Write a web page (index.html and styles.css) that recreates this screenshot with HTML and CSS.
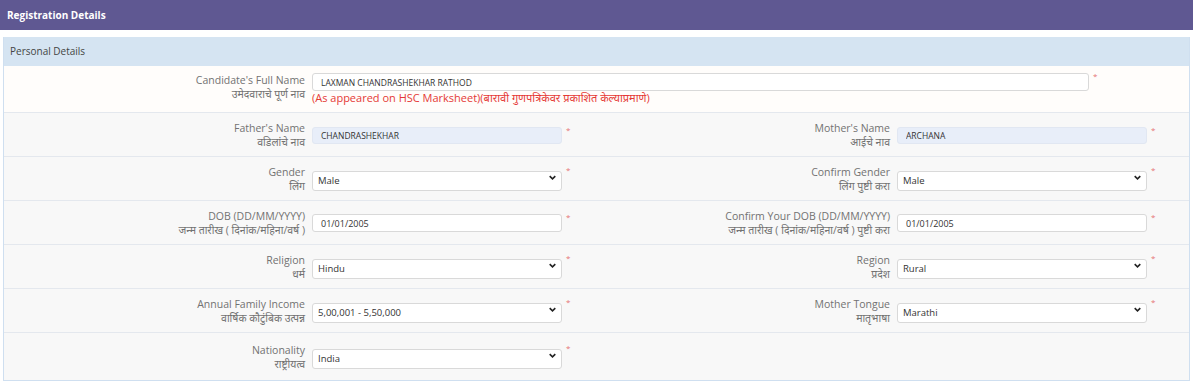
FILE: index.html
```html
<!DOCTYPE html>
<html lang="en">
<head>
  <meta charset="UTF-8">
  <meta name="viewport" content="width=device-width, initial-scale=1.0">
  <title>Registration Details</title>
  <link rel="stylesheet" href="styles.css">
</head>
<body>
  <div class="page-header">Registration Details</div>

  <div class="panel">
    <div class="panel-title">Personal Details</div>

    <!-- Full name -->
    <div class="form-row first">
      <label class="field-label" for="full-name">Candidate's Full Name<span class="mr">उमेदवाराचे पूर्ण नाव</span></label>
      <div class="control-wide">
        <div class="control">
          <input type="text" id="full-name" class="input wide" value="LAXMAN CHANDRASHEKHAR RATHOD">
          <span class="req">*</span>
        </div>
        <div class="hint">(As appeared on HSC Marksheet)(बारावी गुणपत्रिकेवर प्रकाशित केल्याप्रमाणे)</div>
      </div>
    </div>

    <!-- Parents -->
    <div class="form-row alt">
      <label class="field-label" for="father-name">Father's Name<span class="mr">वडिलांचे नाव</span></label>
      <div class="control">
        <input type="text" id="father-name" class="input locked" value="CHANDRASHEKHAR" readonly>
        <span class="req">*</span>
      </div>
      <label class="field-label" for="mother-name">Mother's Name<span class="mr">आईचे नाव</span></label>
      <div class="control">
        <input type="text" id="mother-name" class="input locked" value="ARCHANA" readonly>
        <span class="req">*</span>
      </div>
    </div>

    <!-- Gender -->
    <div class="form-row alt">
      <label class="field-label" for="gender">Gender<span class="mr">लिंग</span></label>
      <div class="control">
        <div class="select-wrap">
          <select id="gender" class="input select"><option>Male</option><option>Female</option></select>
          <svg class="chevron" viewBox="0 0 10 6"><path d="M1 1l4 4 4-4"/></svg>
        </div>
        <span class="req">*</span>
      </div>
      <label class="field-label" for="confirm-gender">Confirm Gender<span class="mr">लिंग पुष्टी करा</span></label>
      <div class="control">
        <div class="select-wrap">
          <select id="confirm-gender" class="input select"><option>Male</option><option>Female</option></select>
          <svg class="chevron" viewBox="0 0 10 6"><path d="M1 1l4 4 4-4"/></svg>
        </div>
        <span class="req">*</span>
      </div>
    </div>

    <!-- DOB -->
    <div class="form-row alt">
      <label class="field-label" for="dob">DOB (DD/MM/YYYY)<span class="mr">जन्म तारीख ( दिनांक/महिना/वर्ष )</span></label>
      <div class="control">
        <input type="text" id="dob" class="input plain" value="01/01/2005">
        <span class="req">*</span>
      </div>
      <label class="field-label" for="confirm-dob">Confirm Your DOB (DD/MM/YYYY)<span class="mr">जन्म तारीख ( दिनांक/महिना/वर्ष ) पुष्टी करा</span></label>
      <div class="control">
        <input type="text" id="confirm-dob" class="input plain" value="01/01/2005">
        <span class="req">*</span>
      </div>
    </div>

    <!-- Religion / Region -->
    <div class="form-row alt">
      <label class="field-label" for="religion">Religion<span class="mr">धर्म</span></label>
      <div class="control">
        <div class="select-wrap">
          <select id="religion" class="input select"><option>Hindu</option></select>
          <svg class="chevron" viewBox="0 0 10 6"><path d="M1 1l4 4 4-4"/></svg>
        </div>
        <span class="req">*</span>
      </div>
      <label class="field-label" for="region">Region<span class="mr">प्रदेश</span></label>
      <div class="control">
        <div class="select-wrap">
          <select id="region" class="input select"><option>Rural</option><option>Urban</option></select>
          <svg class="chevron" viewBox="0 0 10 6"><path d="M1 1l4 4 4-4"/></svg>
        </div>
        <span class="req">*</span>
      </div>
    </div>

    <!-- Income / Tongue -->
    <div class="form-row alt">
      <label class="field-label" for="income">Annual Family Income<span class="mr">वार्षिक कौटुंबिक उत्पन्न</span></label>
      <div class="control">
        <div class="select-wrap">
          <select id="income" class="input select"><option>5,00,001 - 5,50,000</option></select>
          <svg class="chevron" viewBox="0 0 10 6"><path d="M1 1l4 4 4-4"/></svg>
        </div>
        <span class="req">*</span>
      </div>
      <label class="field-label" for="tongue">Mother Tongue<span class="mr">मातृभाषा</span></label>
      <div class="control">
        <div class="select-wrap">
          <select id="tongue" class="input select"><option>Marathi</option></select>
          <svg class="chevron" viewBox="0 0 10 6"><path d="M1 1l4 4 4-4"/></svg>
        </div>
        <span class="req">*</span>
      </div>
    </div>

    <!-- Nationality -->
    <div class="form-row last">
      <label class="field-label" for="nationality">Nationality<span class="mr">राष्ट्रीयत्व</span></label>
      <div class="control">
        <div class="select-wrap">
          <select id="nationality" class="input select"><option>India</option></select>
          <svg class="chevron" viewBox="0 0 10 6"><path d="M1 1l4 4 4-4"/></svg>
        </div>
        <span class="req">*</span>
      </div>
    </div>
  </div>
</body>
</html>
```

FILE: styles.css
```css
body {
  font-family: "Open Sans", "Noto Sans", sans-serif;
  margin: 0;
  padding: 0;
  background-color: #fff;
  color: #555;
}

.page-header {
  height: 30px;
  line-height: 30px;
  padding: 0 7px;
  background-color: #5f5892;
  color: #fff;
  font-size: 10px;
  font-weight: 700;
}

.panel {
  margin: 7px 3px 0;
  border: 1px solid #cfdff0;
  border-top: none;
}

.panel-title {
  padding: 7px 6px;
  line-height: 15px;
  font-size: 10px;
  color: #444;
  background-color: #d5e4f2;
}

.form-row {
  display: grid;
  grid-template-columns: 301px 285px 286px 1fr;
  column-gap: 7px;
  align-items: center;
  padding: 8px 0 7px;
  border-bottom: 1px solid #e4e8ee;
  background-color: #f8f8f8;
}

.form-row.first {
  align-items: start;
  padding: 7px 0;
  background-color: #fffdfb;
}

.form-row.last {
  padding: 10px 0 9px;
  border-bottom: none;
}

.field-label {
  display: block;
  text-align: right;
  font-size: 10.5px;
  line-height: 14px;
  color: #727272;
}

.field-label .mr {
  display: block;
}

.control-wide {
  grid-column: 2 / -1;
}

.control {
  display: flex;
  align-items: flex-start;
}

.input {
  width: 250px;
  height: 18px;
  padding: 0 8px;
  box-sizing: border-box;
  border: 1px solid #d9d9d9;
  border-radius: 3px;
  background-color: #fff;
  font-family: inherit;
  font-size: 8.5px;
  color: #333;
  outline: none;
}

.input.wide {
  width: 777px;
}

.input.locked {
  height: 17px;
  background-color: #e8eef9;
  border-color: #e1e7f2;
}

.input.plain {
  font-size: 9px;
}

.select-wrap {
  position: relative;
}

.input.select {
  height: 20px;
  padding: 0 20px 0 5px;
  font-size: 9.5px;
  appearance: none;
  -webkit-appearance: none;
}

.chevron {
  position: absolute;
  right: 6px;
  top: 8px;
  width: 7px;
  height: 5px;
  fill: none;
  stroke: #222;
  stroke-width: 2.2;
}

.req {
  margin: -3px 0 0 4px;
  font-size: 8px;
  line-height: 12px;
  color: #e57373;
}

.hint {
  line-height: 14px;
  font-size: 11px;
  color: #e53935;
}
```
